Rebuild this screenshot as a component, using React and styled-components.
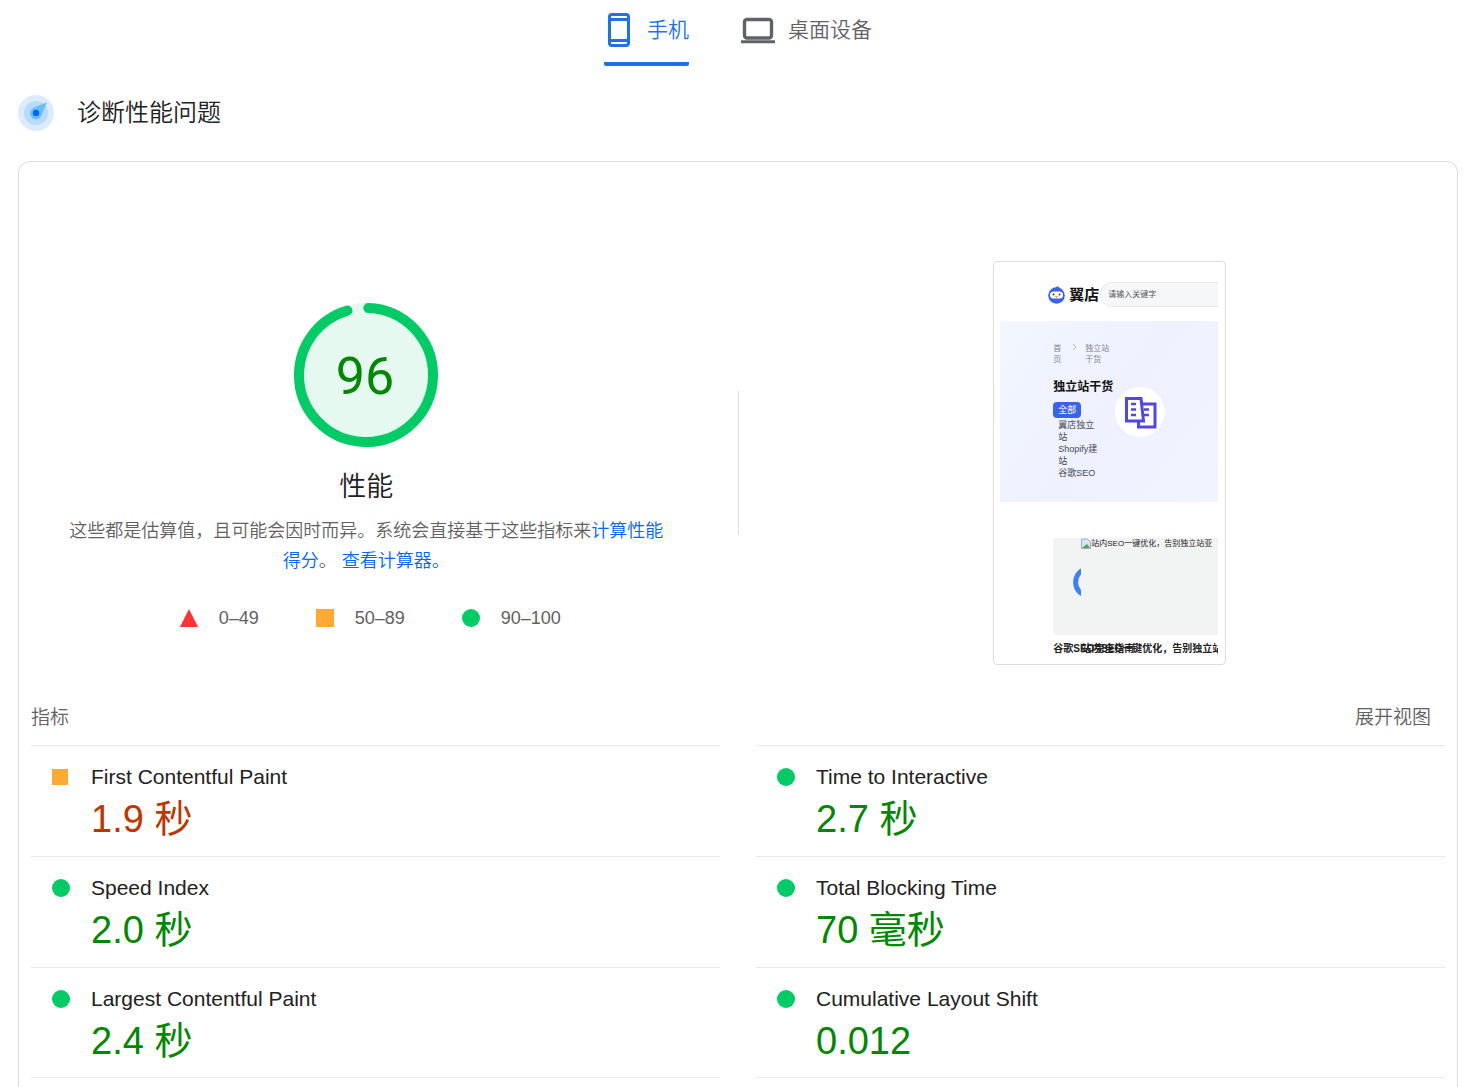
import React from 'react'
import styled, { createGlobalStyle } from 'styled-components'

const GlobalStyle = createGlobalStyle`
  * {
    box-sizing: border-box;
  }

  body {
    margin: 0;
    background: #fff;
    color: #212121;
    font-family: "Liberation Sans", "Noto Sans CJK SC", sans-serif;
  }

  h1, h2, h3, p, ul {
    margin: 0;
    padding: 0;
    font-weight: 350;
  }

  ul {
    list-style: none;
  }

  svg {
    flex: none;
  }

  button {
    border: 0;
    padding: 0;
    background: none;
    font: inherit;
    cursor: pointer;
  }
`;

const Page = styled.main`
  display: flex;
  flex-direction: column;
  min-height: 100vh;
  padding: 0 9px 0 18px;
`;

const Tabs = styled.nav`
  display: flex;
  justify-content: center;
  gap: 52px;
  height: 66px;
`;

const Tab = styled.button`
  display: flex;
  align-items: center;
  gap: 13px;
  padding-bottom: 2px;
  border-bottom: 4px solid ${(props) => (props.$active ? '#1a73e8' : 'transparent')};
  border-radius: 2px;
  color: ${(props) => (props.$active ? '#1a73e8' : '#5f6368')};
  font-size: 21px;
  font-weight: 350;
  line-height: 28px;
`;

const Heading = styled.header`
  display: flex;
  align-items: center;
  gap: 23px;
  padding: 29px 0 30px;
`;

const HeadingTitle = styled.h1`
  font-size: 24px;
  line-height: 36px;
`;

const Card = styled.section`
  flex: 1;
  border: 1px solid #dadce0;
  border-bottom: 0;
  border-radius: 12px 12px 0 0;
`;

const Summary = styled.div`
  display: grid;
  grid-template-columns: 1fr 1px 1fr;
  align-items: center;
  padding-top: 99px;
`;

const Divider = styled.div`
  height: 144px;
  background: #e0e0e0;
`;

const Score = styled.div`
  display: flex;
  flex-direction: column;
  align-items: center;
  align-self: start;
  padding: 42px 72px 0 48px;
`;

const ScoreTitle = styled.h2`
  margin-top: 22px;
  font-size: 27px;
  line-height: 36px;
`;

const ScoreText = styled.p`
  margin-top: 11px;
  color: #616161;
  font-size: 18px;
  line-height: 30px;
  text-align: center;
`;

const Link = styled.a`
  color: #06f;
  text-decoration: none;
`;

const Legend = styled.ul`
  display: flex;
  gap: 57px;
  margin-top: 30px;
  padding-left: 8px;
  color: #616161;
  font-size: 18px;
  line-height: 24px;
`;

const LegendItem = styled.li`
  display: flex;
  align-items: center;
  gap: 21px;
  font-weight: 400;
`;

const Preview = styled.div`
  display: flex;
  justify-content: center;
  padding-left: 24px;
`;

const Frame = styled.div`
  width: 233px;
  height: 404px;
  padding: 6px 7px 6px 6px;
  border: 1px solid #dcdcdc;
  border-radius: 4px;
`;

const Screen = styled.div`
  overflow: hidden;
  color: #222;
  font-size: 9px;
  line-height: 12px;
  white-space: nowrap;
`;

const ShopHeader = styled.div`
  display: flex;
  align-items: center;
  height: 53px;
  padding: 0 0 0 48px;
`;

const ShopName = styled.strong`
  padding: 0 1px 0 4px;
  color: #111;
  font-size: 15px;
  line-height: 20px;
`;

const ShopSearch = styled.input`
  flex: none;
  width: 140px;
  height: 25px;
  padding: 0 7px;
  border: 1px solid #e9eaec;
  border-radius: 12px;
  background: #f6f7f9;
  font-family: inherit;
  font-size: 8px;

  &::placeholder {
    color: #555;
  }
`;

const Hero = styled.div`
  height: 181px;
  padding: 22px 0 0 53px;
  background: linear-gradient(125deg, #f2f7ff, #eff1fe 50%, #f1f3ff);
`;

const Crumbs = styled.div`
  display: flex;
  color: #7f838d;
  font-size: 8px;
  line-height: 11px;
`;

const CrumbArrow = styled.span`
  width: 24px;
  padding-left: 10px;
`;

const HeroBody = styled.div`
  display: flex;
  gap: 2px;
`;

const HeroTitle = styled.h3`
  margin-top: 14px;
  color: #111;
  font-size: 12px;
  font-weight: 700;
  line-height: 16px;
`;

const Pill = styled.span`
  display: block;
  width: 28px;
  margin-top: 7px;
  border-radius: 4px;
  background: #3b62ec;
  color: #fff;
  line-height: 16px;
  text-align: center;
`;

const Topics = styled.ul`
  padding: 1px 0 0 5px;
  color: #444a55;
`;

const Topic = styled.li`
  width: 40px;
  font-weight: 400;
  white-space: normal;
`;

const HeroBadge = styled.div`
  display: grid;
  place-items: center;
  width: 50px;
  height: 50px;
  margin-top: 22px;
  border-radius: 50%;
  background: #fff;
`;

const Article = styled.div`
  padding: 36px 0 0 53px;
`;

const Cover = styled.div`
  display: flex;
  height: 97px;
  padding-left: 19px;
  border-radius: 4px 0 0 4px;
  background: #f2f3f3;
`;

const CoverAlt = styled.span`
  display: flex;
  font-size: 8px;
`;

const Titles = styled.div`
  position: relative;
  height: 28px;
  padding-top: 8px;
  font-size: 10px;
  font-weight: 700;
`;

const TitleOver = styled.span`
  position: absolute;
  left: 28px;
`;

const MetricsHeader = styled.div`
  display: flex;
  justify-content: space-between;
  margin-top: 26px;
  padding: 0 26px 0 12px;
  color: #616161;
  font-size: 19px;
  line-height: 54px;
`;

const MetricsTitle = styled.h2`
  font-size: 19px;
`;

const ExpandButton = styled.button`
  color: #616161;
  font-weight: 350;
`;

const Metrics = styled.div`
  display: grid;
  grid-template-columns: 1fr 1fr;
  gap: 36px;
  padding: 0 12px;
`;

const Metric = styled.li`
  display: grid;
  grid-template-columns: 18px 1fr;
  align-content: start;
  column-gap: 21px;
  height: 111px;
  padding: 16px 0 0 21px;
  border-top: 1px solid #ebebeb;

  &:last-child {
    border-bottom: 1px solid #ebebeb;
  }
`;

const MetricIcon = styled.span`
  display: flex;
  align-items: center;
  height: 30px;
`;

const MetricLabel = styled.h3`
  font-size: 21px;
  font-weight: 400;
  line-height: 30px;
`;

const MetricValue = styled.p`
  grid-column: 2;
  color: ${(props) => (props.$level === 'average' ? '#c33300' : '#080')};
  font-size: 38px;
  font-weight: 400;
  line-height: 54px;
`;

const Triangle = () => (
  <svg width="18" height="18" viewBox="0 0 18 18" aria-hidden="true">
    <path d="M9 0 18 18H0z" fill="#f33" />
  </svg>
);

const Square = styled.span`
  width: ${(props) => props.$size}px;
  height: ${(props) => props.$size}px;
  background: #fa3;
`;

const Dot = styled.span`
  width: 18px;
  height: 18px;
  border-radius: 50%;
  background: #0c6;
`;

const PhoneIcon = () => (
  <svg width="30" height="36" viewBox="0 0 30 36" fill="none" aria-hidden="true">
    <rect x="5.5" y="2.5" width="19" height="31" rx="2.5" stroke="currentColor" strokeWidth="3" />
    <path d="M5 7.500h20M5 28.500h20" stroke="currentColor" strokeWidth="3" />
  </svg>
);

const LaptopIcon = () => (
  <svg width="34" height="36" viewBox="0 0 34 36" fill="none" aria-hidden="true">
    <rect x="3.5" y="7.5" width="27" height="18.5" rx="2.5" stroke="currentColor" strokeWidth="3.4" />
    <path d="M0 29.800h34" stroke="currentColor" strokeWidth="3" />
  </svg>
);

const CompassIcon = () => (
  <svg width="36" height="36" viewBox="0 0 36 36" aria-hidden="true">
    <circle cx="18" cy="18" r="18" fill="#dcebfe" />
    <circle cx="18" cy="18" r="12" fill="#b9dafd" />
    <path d="M28.800 7.300 23.500 20.500A6 6 0 1 1 15 13z" fill="#63c0fc" />
    <circle cx="18" cy="18" r="3.2" fill="#0566f5" />
  </svg>
);

const Gauge = ({ score }) => {
  const length = 2 * Math.PI * 67;
  const arc = (score / 100) * length - 5;
  return (
    <svg width="144" height="144" viewBox="0 0 144 144" role="img" aria-label={`${score}`}>
      <circle cx="72" cy="72" r="72" fill="#e6f9f0" />
      <circle
        cx="72"
        cy="72"
        r="67"
        fill="none"
        stroke="#0c6"
        strokeWidth="10"
        strokeLinecap="round"
        strokeDasharray={`${arc} ${length}`}
        transform="rotate(-88 72 72)"
      />
      <text x="71" y="91" textAnchor="middle" fill="#080" fontFamily="Roboto, sans-serif" fontSize="52">
        {score}
      </text>
    </svg>
  );
};

const BirdLogo = () => (
  <svg width="17" height="18" viewBox="0 0 17 18" aria-hidden="true">
    <path d="M7 1.500C9 0 11 0 11 1.500L13 3z" fill="#3b62ec" />
    <circle cx="8.500" cy="9.500" r="8.300" fill="#3b62ec" />
    <rect x="2" y="5.500" width="13" height="7" rx="3.500" fill="#fff" />
    <circle cx="5.500" cy="8.500" r="1" fill="#26378c" />
    <circle cx="11.500" cy="8.500" r="1" fill="#26378c" />
    <path d="M6.800 10h3.400L8.500 12.500z" fill="#f7a13c" />
  </svg>
);

const BuildingsIcon = () => (
  <svg width="34" height="34" viewBox="0 0 34 34" fill="none" stroke="#5048e5" strokeWidth="3" aria-hidden="true">
    <path d="M18 3.500H3.500V26H20.500z" />
    <path d="M19 9H32V32H15.500V27" />
    <path d="M8 9h5M8 14.500h5M8 20h5M21 14.500h5M21 20h5" strokeWidth="2.500" />
  </svg>
);

const BrokenImageIcon = () => (
  <svg width="10" height="11" viewBox="0 0 10 11" aria-hidden="true">
    <path d="M0.500 1h6l3 3v6.500h-9z" fill="#d5e4f7" stroke="#a4abb5" />
    <path d="M1 10 6 6l3 4z" fill="#55a451" />
  </svg>
);

const Loader = () => (
  <svg width="9" height="97" viewBox="0 0 9 97" fill="none" aria-hidden="true">
    <path d="M10 32.500A14 14 0 0 0 10 56" stroke="#3b82f6" strokeWidth="5" />
  </svg>
);

const ShopPreview = () => (
  <Frame>
    <Screen>
      <ShopHeader>
        <BirdLogo />
        <ShopName>翼店</ShopName>
        <ShopSearch placeholder="请输入关键字" aria-label="请输入关键字" />
      </ShopHeader>
      <Hero>
        <Crumbs>
          <span>首<br />页</span>
          <CrumbArrow>
            <svg width="6" height="8" viewBox="0 0 6 8" fill="none" stroke="#b5b8c0" aria-hidden="true">
              <path d="m2 1 3 3-3 3" />
            </svg>
          </CrumbArrow>
          <span>独立站<br />干货</span>
        </Crumbs>
        <HeroBody>
          <div>
            <HeroTitle>独立站干货</HeroTitle>
            <Pill>全部</Pill>
            <Topics>
              <Topic>翼店独立站</Topic>
              <Topic>Shopify建站</Topic>
              <Topic>谷歌SEO</Topic>
            </Topics>
          </div>
          <HeroBadge>
            <BuildingsIcon />
          </HeroBadge>
        </HeroBody>
      </Hero>
      <Article>
        <Cover>
          <Loader />
          <CoverAlt>
            <BrokenImageIcon />
            站内SEO一键优化，告别独立站亚
          </CoverAlt>
        </Cover>
        <Titles>
          <TitleOver>站内SEO一键优化，告别独立站</TitleOver>
          谷歌SEO完全指南
        </Titles>
      </Article>
    </Screen>
  </Frame>
);

const columns = [
  [
    { label: 'First Contentful Paint', value: '1.9 秒', level: 'average' },
    { label: 'Speed Index', value: '2.0 秒', level: 'good' },
    { label: 'Largest Contentful Paint', value: '2.4 秒', level: 'good' },
  ],
  [
    { label: 'Time to Interactive', value: '2.7 秒', level: 'good' },
    { label: 'Total Blocking Time', value: '70 毫秒', level: 'good' },
    { label: 'Cumulative Layout Shift', value: '0.012', level: 'good' },
  ],
];

const App = () => {
  return (
    <>
      <GlobalStyle />
      <Page>
        <Tabs>
          <Tab $active>
            <PhoneIcon />
            手机
          </Tab>
          <Tab>
            <LaptopIcon />
            桌面设备
          </Tab>
        </Tabs>

        <Heading>
          <CompassIcon />
          <HeadingTitle>诊断性能问题</HeadingTitle>
        </Heading>

        <Card>
          <Summary>
            <Score>
              <Gauge score={96} />
              <ScoreTitle>性能</ScoreTitle>
              <ScoreText>
                这些都是估算值，且可能会因时而异。系统会直接基于这些指标来<Link href="#score">计算性能得分</Link>。{' '}
                <Link href="#calculator">查看计算器。</Link>
              </ScoreText>
              <Legend>
                <LegendItem><Triangle />0–49</LegendItem>
                <LegendItem><Square $size={18} />50–89</LegendItem>
                <LegendItem><Dot />90–100</LegendItem>
              </Legend>
            </Score>
            <Divider />
            <Preview>
              <ShopPreview />
            </Preview>
          </Summary>

          <MetricsHeader>
            <MetricsTitle>指标</MetricsTitle>
            <ExpandButton>展开视图</ExpandButton>
          </MetricsHeader>
          <Metrics>
            {columns.map((metrics, index) => (
              <ul key={index}>
                {metrics.map(({ label, value, level }) => (
                  <Metric key={label}>
                    <MetricIcon>{level === 'average' ? <Square $size={16} /> : <Dot />}</MetricIcon>
                    <MetricLabel>{label}</MetricLabel>
                    <MetricValue $level={level}>{value}</MetricValue>
                  </Metric>
                ))}
              </ul>
            ))}
          </Metrics>
        </Card>
      </Page>
    </>
  );
};

export default App
